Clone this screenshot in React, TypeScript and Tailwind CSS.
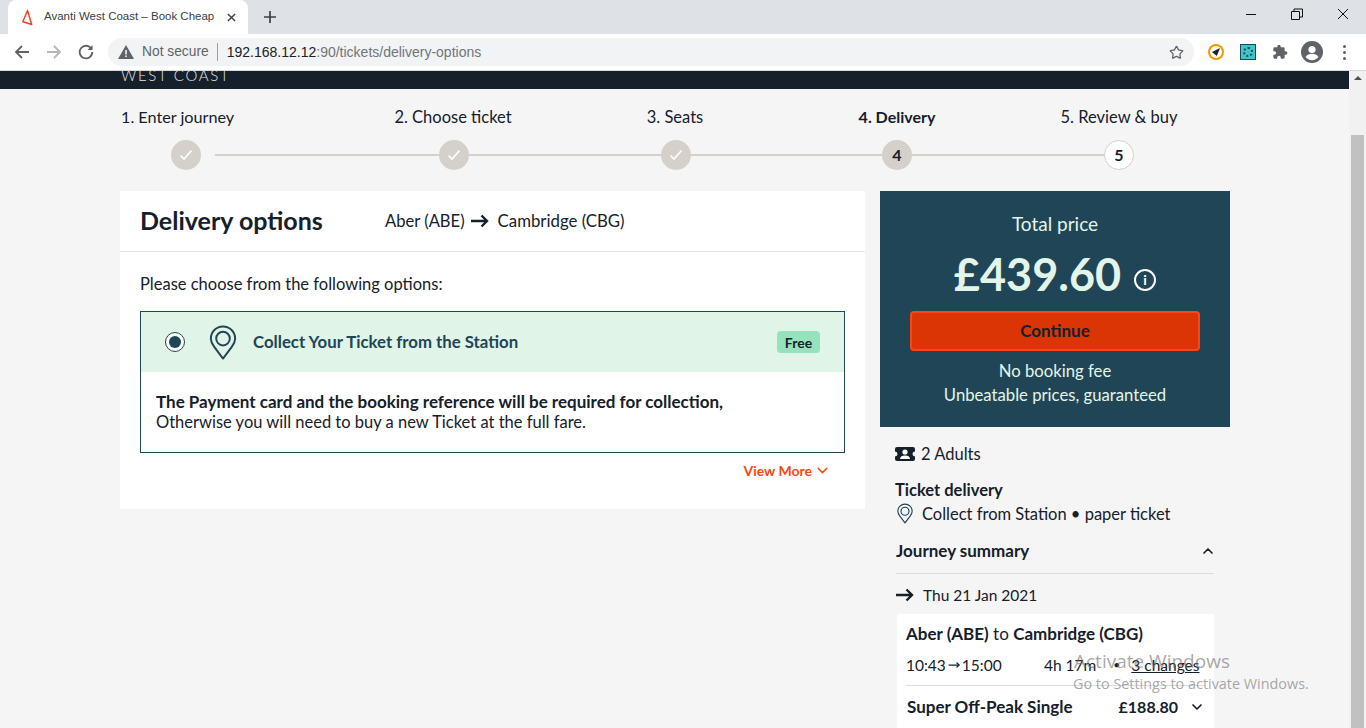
import { ChevronDown, ChevronUp, MoveRight, Star } from "lucide-react";

const PinIcon = ({ className }: { className?: string }) => (
  <svg viewBox="0 0 28 36" fill="none" stroke="currentColor" strokeWidth="2" className={className}>
    <path d="M14 34.5 5 22.5C2.8 19.8 1.5 17.2 1.5 14 1.5 7 7 1.5 14 1.5S26.5 7 26.5 14c0 3.2-1.3 5.8-3.5 8.5L14 34.5Z" strokeLinejoin="round" />
    <circle cx="14" cy="14" r="7" />
  </svg>
);

const BoldArrow = ({ className }: { className?: string }) => (
  <svg viewBox="0 0 18 14" fill="none" stroke="currentColor" strokeWidth="2.4" className={className}>
    <path d="M0 7h16M10.5 1.5 16 7l-5.5 5.5" />
  </svg>
);

const Check = () => (
  <svg viewBox="0 0 14 12" fill="none" stroke="white" strokeWidth="1.6" className="w-[14px] h-[12px]">
    <path d="M1.5 6.5 5 10l7.5-8.5" />
  </svg>
);

const StepCircle = ({ label }: { label?: string }) => (
  <div className="w-[30px] h-[30px] rounded-full bg-[#d5d0c9] flex items-center justify-center shrink-0">
    {label ? <span className="font-bold text-[16px] text-[#15202b]">{label}</span> : <Check />}
  </div>
);

const StepLine = ({ width }: { width: string }) => <div className={`${width} h-[2px] bg-[#d5d0c9]`} />;

const BrowserChrome = () => (
  <div className="font-['Open_Sans',sans-serif]">
    <div className="h-[34px] bg-[#dee1e6] flex items-end relative">
      <div className="ml-[8px] w-[240px] h-[34px] bg-white rounded-t-[8px] flex items-center pl-[13px] pr-[10px]">
        <svg viewBox="0 0 14 18" fill="none" stroke="#f0431c" strokeWidth="1.6" className="w-[13px] h-[17px] shrink-0">
          <path d="M7 1.5 2 13.5l9.5 3L7 1.5Z" strokeLinejoin="round" />
        </svg>
        <span className="ml-[10px] w-[172px] overflow-hidden whitespace-nowrap text-[11.5px] text-[#3c4043] font-['Liberation_Sans',sans-serif]">
          Avanti West Coast – Book Cheap Train Tickets
        </span>
        <svg viewBox="0 0 10 10" stroke="#3c4043" strokeWidth="1.6" className="w-[9px] h-[9px] ml-[11px] shrink-0">
          <path d="M1 1l8 8M9 1l-8 8" />
        </svg>
      </div>
      <svg viewBox="0 0 12 12" stroke="#3c4043" strokeWidth="1.7" className="w-[12px] h-[12px] ml-[16px] mb-[11px]">
        <path d="M6 0v12M0 6h12" />
      </svg>
      <div className="ml-auto flex items-center self-start h-[28px] gap-[34px] pr-[17px]">
        <svg viewBox="0 0 12 12" stroke="#111" fill="none" className="w-[12px] h-[12px]">
          <path d="M1 6.5h10" />
        </svg>
        <svg viewBox="0 0 12 12" stroke="#111" fill="none" className="w-[12px] h-[12px]">
          <path d="M.5 3.5h8v8h-8zM3 3.5V1h8.500v8H8.500" />
        </svg>
        <svg viewBox="0 0 12 12" stroke="#111" fill="none" className="w-[12px] h-[12px]">
          <path d="M1 1l10 10M11 1 1 11" />
        </svg>
      </div>
    </div>
    <div className="h-[37px] bg-white border-b border-[#d9d9d9] flex items-center">
      <svg viewBox="0 0 16 16" fill="none" stroke="#5f6368" strokeWidth="1.8" className="ml-[14px] w-[16px] h-[16px]">
        <path d="M15 8H2M8 2 2 8l6 6" />
      </svg>
      <svg viewBox="0 0 16 16" fill="none" stroke="#b4b6b9" strokeWidth="1.8" className="ml-[16px] w-[16px] h-[16px]">
        <path d="M1 8h13M8 2l6 6-6 6" />
      </svg>
      <svg viewBox="0 0 16 16" fill="none" stroke="#5f6368" strokeWidth="1.8" className="ml-[16px] w-[16px] h-[16px]">
        <path d="M13.500 5A6.300 6.300 0 1 0 14.300 8" />
        <path d="M14.500 1v5h-5" fill="#5f6368" stroke="none" />
      </svg>
      <div className="ml-[14px] w-[1086px] h-[28px] rounded-full bg-[#f1f3f4] flex items-center pl-[10px] pr-[10px]">
        <svg viewBox="0 0 16 14" fill="#5f6368" className="w-[16px] h-[14px]">
          <path d="M8 0 16 14H0L8 0Z" />
          <path d="M7.200 5h1.600v4.500H7.200zM7.200 10.500h1.600V12H7.200z" fill="#f1f3f4" />
        </svg>
        <span className="ml-[8px] text-[13.800px] text-[#5f6368] font-['Liberation_Sans',sans-serif]">Not secure</span>
        <div className="ml-[8px] w-px h-[18px] bg-[#9aa0a6]" />
        <span className="ml-[9px] text-[14px] text-[#70757a] font-['Liberation_Sans',sans-serif]">
          <span className="text-[#202124]">192.168.12.12</span>:90/tickets/delivery-options
        </span>
        <Star className="ml-auto w-[15px] h-[15px] text-[#5f6368]" strokeWidth={2} />
      </div>
      <div className="ml-[14px] w-[16px] h-[16px] rounded-full border-[2.500px] border-[#f29900] relative shrink-0">
        <div className="absolute inset-[2px] bg-[#222] [clip-path:polygon(100%_0,60%_100%,0_50%)]" />
      </div>
      <div className="ml-[16px] w-[16px] h-[16px] bg-[#3fc4c8] border border-[#174a57] flex items-center justify-center shrink-0">
        <div className="w-[10px] h-[10px] rounded-full border-2 border-dotted border-[#174a57]" />
      </div>
      <svg viewBox="0 0 24 24" fill="#5f6368" className="ml-[16px] w-[16px] h-[16px] shrink-0">
        <path d="M20.500 11H19V7a2 2 0 0 0-2-2h-4V3.500a2.500 2.500 0 0 0-5 0V5H4a2 2 0 0 0-2 2v3.800h1.500a2.700 2.700 0 0 1 0 5.400H2V20a2 2 0 0 0 2 2h3.800v-1.500a2.700 2.700 0 0 1 5.400 0V22H17a2 2 0 0 0 2-2v-4h1.500a2.500 2.500 0 0 0 0-5Z" />
      </svg>
      <svg viewBox="0 0 22 22" className="ml-[13px] w-[22px] h-[22px] shrink-0">
        <circle cx="11" cy="11" r="11" fill="#5f6368" />
        <circle cx="11" cy="8.500" r="3.600" fill="white" />
        <path d="M4.500 16c1.500-2.300 4-3.200 6.500-3.200s5 .9 6.500 3.200c-1.500 2-3.800 3.200-6.500 3.200S6 18 4.500 16Z" fill="white" />
      </svg>
      <div className="ml-[20px] flex flex-col gap-[3px] shrink-0">
        <div className="w-[3px] h-[3px] rounded-full bg-[#5f6368]" />
        <div className="w-[3px] h-[3px] rounded-full bg-[#5f6368]" />
        <div className="w-[3px] h-[3px] rounded-full bg-[#5f6368]" />
      </div>
    </div>
  </div>
);

const Steps = () => (
  <div className="pl-[120px] pt-[18px] text-[16.500px] text-[#15202b]">
    <div className="flex gap-[22px] h-[20px] items-center leading-[20px]">
      <div className="w-[211px] pl-px text-[16.200px]">1. Enter journey</div>
      <div className="w-[200px] text-center">2. Choose ticket</div>
      <div className="w-[200px] text-center">3. Seats</div>
      <div className="w-[200px] text-center font-bold text-[16px]">4. Delivery</div>
      <div className="w-[200px] text-center">5. Review &amp; buy</div>
    </div>
    <div className="flex items-center mt-[13px] pl-[51px]">
      <StepCircle />
      <div className="w-[14px]" />
      <StepLine width="w-[224px]" />
      <StepCircle />
      <StepLine width="w-[192px]" />
      <StepCircle />
      <StepLine width="w-[191px]" />
      <StepCircle label="4" />
      <StepLine width="w-[192px]" />
      <div className="w-[30px] h-[30px] rounded-full bg-white border border-[#d5d0c9] flex items-center justify-center font-bold text-[16px]">5</div>
    </div>
  </div>
);

const DeliveryCard = () => (
  <div className="w-[745px] h-[318px] bg-white text-[#15202b]">
    <div className="h-[61px] border-b border-[#e4e4e4] flex items-center pl-[20px]">
      <h1 className="w-[245px] text-[25px] font-bold">Delivery options</h1>
      <span className="text-[16.600px]">Aber (ABE)</span>
      <BoldArrow className="w-[18px] h-[14px] ml-[6px] mr-[9px]" />
      <span className="text-[16.800px]">Cambridge (CBG)</span>
    </div>
    <div className="px-[20px]">
      <p className="text-[16.500px] leading-[20px] mt-[22px]">Please choose from the following options:</p>
      <div className="mt-[17px] h-[142px] border border-[#204556]">
        <div className="h-[60px] bg-[#e0f4e8] flex items-center pl-[24px] pr-[24px] text-[#204556]">
          <div className="w-[20px] h-[20px] rounded-full bg-white border border-[#204556] flex items-center justify-center">
            <div className="w-[12px] h-[12px] rounded-full bg-[#204556]" />
          </div>
          <PinIcon className="ml-[24px] w-[28px] h-[35px]" />
          <span className="ml-[16px] text-[16.800px] font-bold">Collect Your Ticket from the Station</span>
          <span className="ml-auto w-[43px] h-[22px] rounded-[4px] bg-[#96e2bd] text-[14px] font-bold text-[#15202b] flex items-center justify-center">
            Free
          </span>
        </div>
        <div className="px-[15px] pt-[20px] text-[16.500px] leading-[20px]">
          <p className="font-bold text-[17px]">The Payment card and the booking reference will be required for collection,</p>
          <p>Otherwise you will need to buy a new Ticket at the full fare.</p>
        </div>
      </div>
      <div className="flex items-center justify-end mt-[7px] pr-[14px] text-[#fa4616] text-[14px] font-bold">
        View More
        <ChevronDown className="w-[17px] h-[17px] ml-[2px]" strokeWidth={2} />
      </div>
    </div>
  </div>
);

const PricePanel = () => (
  <div className="h-[236px] bg-[#204556] flex flex-col items-center text-[#e3f5ea] pt-[21px]">
    <div className="text-[19px] leading-[24px]">Total price</div>
    <div className="flex items-center mt-[14px] h-[48px]">
      <span className="text-[45px] font-bold leading-[48px]">£439.60</span>
      <span className="ml-[13px] mt-[11px] w-[22px] h-[22px] rounded-full border-2 border-white text-white text-[14px] font-bold flex items-center justify-center">
        i
      </span>
    </div>
    <button className="mt-[13px] w-[290px] h-[40px] rounded-[4px] bg-[#dc3505] border-2 border-[#fa4616] text-[17px] font-bold text-[#15202b]">
      Continue
    </button>
    <div className="mt-[8px] text-[16.700px] leading-[24px] text-center">
      <div>No booking fee</div>
      <div>Unbeatable prices, guaranteed</div>
    </div>
  </div>
);

const SummaryPanel = () => (
  <div className="text-[16.500px] text-[#15202b] leading-[20px] pl-[15px] pr-[16px]">
    <div className="flex items-center mt-[17px]">
      <svg viewBox="0 0 20 14" className="w-[20px] h-[14px]">
        <path d="M0 2a2 2 0 0 1 2-2h16a2 2 0 0 1 2 2v2.500a2.500 2.500 0 0 0 0 5V12a2 2 0 0 1-2 2H2a2 2 0 0 1-2-2V9.500a2.500 2.500 0 0 0 0-5V2Z" fill="#15202b" />
        <circle cx="10" cy="5" r="2.600" fill="white" />
        <path d="M5 12c0-2.500 2.200-3.600 5-3.600s5 1.100 5 3.600H5Z" fill="white" />
      </svg>
      <span className="ml-[6px]">2 Adults</span>
    </div>
    <div className="mt-[16px] font-bold">Ticket delivery</div>
    <div className="flex items-center mt-[3px]">
      <PinIcon className="w-[16px] h-[21px] ml-[2px] text-[#204556]" />
      <span className="ml-[9px]">Collect from Station • paper ticket</span>
    </div>
    <div className="flex items-center justify-between mt-[17px] pl-px h-[20px] font-bold text-[17px]">
      Journey summary
      <ChevronUp className="w-[16px] h-[16px] -mr-[2px]" strokeWidth={2.500} />
    </div>
    <div className="ml-px mt-[12px] border-t border-[#dcdcdc]" />
    <div className="flex items-center mt-[11px] pl-px">
      <BoldArrow className="w-[18px] h-[14px]" />
      <span className="ml-[9px] text-[15.500px]">Thu 21 Jan 2021</span>
    </div>
    <div className="ml-[2px] mt-[9px] bg-white px-[9px] pt-[10px]">
      <div className="text-[17px] whitespace-nowrap">
        <b>Aber (ABE)</b> to <b>Cambridge (CBG)</b>
      </div>
      <div className="flex items-center mt-[11px] h-[20px] text-[15.500px] whitespace-nowrap">
        <span className="w-[138px] flex items-center">
          10:43
          <MoveRight className="w-[12px] h-[12px] mx-[2px]" strokeWidth={2.500} />
          15:00
        </span>
        <span>4h 17m</span>
        <span className="ml-[17px] text-[12px]">•</span>
        <span className="ml-[11px] underline">3 changes</span>
      </div>
      <div className="mt-[10px] border-t border-[#dcdcdc]" />
      <div className="flex items-center h-[42px] font-bold pl-px whitespace-nowrap">
        <span className="w-[212px] text-[17px]">Super Off-Peak Single</span>
        <span className="text-[16px]">£188.80</span>
        <ChevronDown className="w-[16px] h-[16px] ml-[11px]" strokeWidth={2.500} />
      </div>
    </div>
  </div>
);

const Scrollbar = () => (
  <div className="w-[17px] bg-[#f1f1f1] flex flex-col items-center shrink-0">
    <div className="h-[64px] pt-[4px]">
      <div className="w-0 h-0 border-x-[4px] border-x-transparent border-b-[4px] border-b-[#505050] mt-[1px]" />
    </div>
    <div className="w-[13px] flex-1 bg-[#c1c1c1]" />
  </div>
);

export default function App() {
  return (
    <div className="w-[1366px] h-[728px] overflow-hidden flex flex-col relative font-['Lato',sans-serif] bg-[#f5f5f5]">
      <BrowserChrome />
      <div className="flex-1 flex min-h-0">
        <main className="flex-1 min-w-0 overflow-hidden">
          <div className="h-[18px] bg-[#15202b] pl-[121px] overflow-hidden">
            <div className="text-[15px] leading-[9px] tracking-[1.700px] font-light text-[#e3e6e8]">WEST COAST</div>
          </div>
          <Steps />
          <div className="flex gap-[15px] pl-[120px] mt-[21px]">
            <DeliveryCard />
            <div className="w-[350px]">
              <PricePanel />
              <SummaryPanel />
            </div>
          </div>
        </main>
        <Scrollbar />
      </div>
      <div className="absolute left-[1073px] top-[649px] text-[#6d6d6d]/60 font-['Open_Sans',sans-serif] pointer-events-none whitespace-nowrap">
        <div className="text-[19px] leading-[24px] ml-px">Activate Windows</div>
        <div className="text-[14.400px] leading-[20px] mt-px">Go to Settings to activate Windows.</div>
      </div>
    </div>
  );
}
